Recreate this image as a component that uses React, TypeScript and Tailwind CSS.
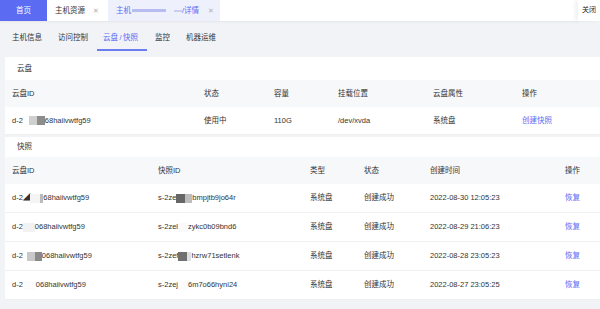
import React from "react";

const font = { fontFamily: '"Liberation Sans", "Noto Sans CJK SC", sans-serif' };

type Piece = { t?: string; w?: number; c?: string };

// blurred/redacted ids, drawn as text plus grey blocks
const Masked = ({ parts }: { parts: Piece[] }) => (
  <span className="inline-flex items-center whitespace-nowrap">
    {parts.map((p, i) =>
      p.t ? (
        <span key={i}>{p.t}</span>
      ) : (
        <span
          key={i}
          className="inline-block h-[9px]"
          style={{ width: p.w, background: p.c }}
        />
      )
    )}
  </span>
);

const diskCols = "grid grid-cols-[192px_70px_64px_95px_89px_1fr]";
const snapCols = "grid grid-cols-[146px_152px_54px_66px_135px_1fr]";

const snaps: { disk: Piece[]; snap: Piece[]; time: string }[] = [
  {
    disk: [{ t: "d-2◢" }, { w: 10, c: "#f4f4f4" }, { w: 3, c: "#bbb" }, { t: "68haiivwtfg59" }],
    snap: [{ t: "s-2ze" }, { w: 9, c: "#666" }, { w: 7, c: "#bdbdbd" }, { t: "bmpjtb9jo64r" }],
    time: "2022-08-30 12:05:23",
  },
  {
    disk: [{ t: "d-2" }, { w: 12, c: "#f2f2f2" }, { t: "068haiivwtfg59" }],
    snap: [{ t: "s-2zel" }, { w: 10, c: "#fafafa" }, { t: "zykc0b09bnd6" }],
    time: "2022-08-29 21:06:23",
  },
  {
    disk: [{ t: "d-2" }, { w: 4, c: "#fff" }, { w: 8, c: "#c8c8c8" }, { w: 7, c: "#8a8a8a" }, { t: "068haiivwtfg59" }],
    snap: [{ t: "s-2zef" }, { w: 9, c: "#707070" }, { w: 4, c: "#e0e0e0" }, { t: "hzrw71setlenk" }],
    time: "2022-08-28 23:05:23",
  },
  {
    disk: [{ t: "d-2" }, { w: 13, c: "#fcfcfc" }, { t: "068haiivwtfg59" }],
    snap: [{ t: "s-2zej" }, { w: 10, c: "#fcfcfc" }, { t: "6m7o66hyni24" }],
    time: "2022-08-27 23:05:25",
  },
];

export default function App() {
  return (
    <div
      className="w-[600px] h-[309px] overflow-hidden bg-[#f2f3f7] text-[7.5px] text-[#333]"
      style={font}
    >
      {/* page tabs */}
      <div className="h-[21px] flex items-stretch">
        <div className="flex flex-1 bg-white shadow-[0_1px_2px_rgba(0,0,0,0.06)]">
          <div className="w-[47px] shrink-0 bg-[#5b6cf3] text-white flex items-center justify-center">首页</div>
          <div className="w-[61px] shrink-0 flex items-center pl-[8px] gap-[8px] whitespace-nowrap">
            <span>主机资源</span>
            <span className="text-[#b0b0b0] text-[6.5px]">✕</span>
          </div>
          <div className="w-[112px] shrink-0 bg-[#eef0fb] flex items-center pl-[8px] text-[#5b6cf3] whitespace-nowrap">
            <span className="shrink-0">主机</span>
            <span className="shrink-0 inline-block w-[34px] h-[3px] bg-[#b7bdf0] ml-[1px]" />
            <span className="shrink-0 inline-block w-[8px] h-[2px] bg-[#c9cdf4] ml-[8px]" />
            <span className="shrink-0">/详情</span>
            <span className="shrink-0 text-[#b0b0b0] text-[6.5px] ml-[9px]">✕</span>
          </div>
        </div>
        <div className="w-[22px] bg-white flex items-center justify-center text-[7px] text-[#222] shadow-[-3px_0_4px_rgba(0,0,0,0.06)]">
          关闭
        </div>
      </div>

      {/* sub tabs */}
      <div className="h-[36px] flex items-stretch pl-[6px]">
        <div className="w-[46px] pl-[6px] flex items-center pb-[3px]">主机信息</div>
        <div className="w-[45px] pl-[6px] flex items-center pb-[3px]">访问控制</div>
        <div className="w-[52px] pl-[6px] flex items-center pb-[3px] text-[#5b6cf3] relative">
          云盘<span className="mx-[1.5px]">/</span>快照
          <span className="absolute left-0 w-[50px] top-[28px] h-[2px] bg-[#6b7bf0]" />
        </div>
        <div className="w-[31px] pl-[6px] flex items-center pb-[3px]">监控</div>
        <div className="pl-[6px] flex items-center pb-[3px]">机器运维</div>
      </div>

      {/* cloud disk card */}
      <div className="ml-[5px] bg-white">
        <div className="h-[23px] flex items-center pl-[12px] pt-[1px]">云盘</div>
        <div className={`${diskCols} h-[27px] items-center bg-[#f7f8fa] pl-[7px]`}>
          <div>云盘ID</div>
          <div>状态</div>
          <div>容量</div>
          <div>挂载位置</div>
          <div>云盘属性</div>
          <div>操作</div>
        </div>
        <div className={`${diskCols} h-[28px] items-center pl-[7px] border-b border-[#f0f0f0]`}>
          <Masked parts={[{ t: "d-2" }, { w: 6, c: "#fff" }, { w: 8, c: "#cfcfcf" }, { w: 8, c: "#8c8c8c" }, { t: "68haiivwtfg59" }]} />
          <div>使用中</div>
          <div>110G</div>
          <div>/dev/xvda</div>
          <div>系统盘</div>
          <div className="text-[#5b6cf3]">创建快照</div>
        </div>
      </div>

      {/* snapshot card */}
      <div className="ml-[5px] mt-[2px] bg-white">
        <div className="h-[20px] flex items-center pl-[12px]">快照</div>
        <div className={`${snapCols} h-[27px] items-center bg-[#f7f8fa] pl-[7px]`}>
          <div>云盘ID</div>
          <div>快照ID</div>
          <div>类型</div>
          <div>状态</div>
          <div>创建时间</div>
          <div>操作</div>
        </div>
        {snaps.map((s, i) => (
          <div key={i} className={`${snapCols} h-[29px] items-center pl-[7px] border-b border-[#f0f0f0]`}>
            <Masked parts={s.disk} />
            <Masked parts={s.snap} />
            <div>系统盘</div>
            <div>创建成功</div>
            <div>{s.time}</div>
            <div className="text-[#5b6cf3]">恢复</div>
          </div>
        ))}
      </div>
    </div>
  );
}
